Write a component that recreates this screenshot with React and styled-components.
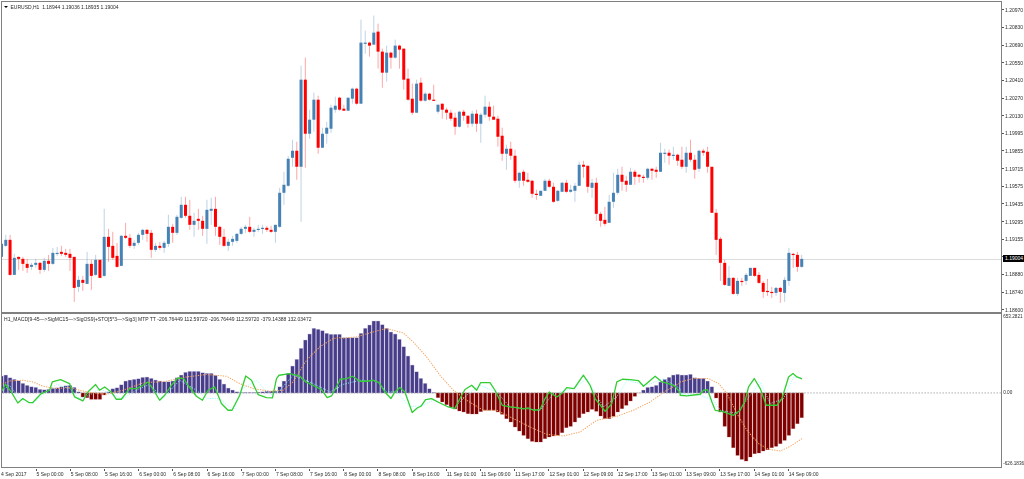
import React from 'react';
import styled, { createGlobalStyle } from 'styled-components';

const GlobalStyle = createGlobalStyle`
  html, body {
    margin: 0;
    padding: 0;
    background: #fff;
  }
  body {
    width: 1024px;
    height: 479px;
    overflow: hidden;
  }
`;

const Page = styled.div`
  display: grid;
  grid-template-columns: 1001px 22px;
  grid-template-rows: 311px 156px 11px;
  padding: 1px 0 0 1px;
  width: 1024px;
  height: 479px;
  box-sizing: border-box;
  font-family: 'Liberation Sans', Arial, sans-serif;
  font-size: 5px;
  color: #2a2a2a;
  filter: blur(0.25px);
`;

const Pane = styled.div`
  position: relative;
  box-sizing: border-box;
  border: 0 solid #808080;
  border-width: ${(p) => (p.$sub ? '2px 1.5px 1.5px 1.5px' : '1.5px 1.5px 0 1.5px')};
  overflow: hidden;
  svg {
    display: block;
    width: 100%;
    height: 100%;
  }
`;

const Legend = styled.div`
  position: absolute;
  left: ${(p) => p.$left}px;
  top: ${(p) => p.$top}px;
  display: flex;
  align-items: center;
  gap: 3px;
  white-space: pre;
  line-height: 6px;
  letter-spacing: ${(p) => p.$track || 0}px;
`;

const Arrow = styled.span`
  width: 0;
  height: 0;
  border-left: 2.5px solid transparent;
  border-right: 2.5px solid transparent;
  border-top: 2.5px solid #000;
`;

const PriceAxis = styled.div`
  display: flex;
  flex-direction: column;
`;

const PriceRow = styled.div`
  flex: 0 0 17.65px;
  display: flex;
  align-items: center;
  padding-left: 3px;
  background: linear-gradient(#555, #555) 0 50% / 2px 1px no-repeat;
`;

const Badge = styled.span`
  margin-left: -2px;
  padding: 0 0 0 2px;
  width: 21px;
  line-height: 7px;
  background: #000;
  color: #fff;
  transform: translateY(2px);
`;

const SubAxis = styled.div`
  display: flex;
  flex-direction: column;
  padding-top: 2px;
`;

const SubLabel = styled.div`
  height: 6px;
  line-height: 6px;
  margin-top: ${(p) => p.$gap}px;
  padding-left: 1.2px;
  font-size: 4.65px;
  white-space: nowrap;
`;

const TimeAxis = styled.div`
  grid-column: 1 / 3;
  display: flex;
  padding-top: 1px;
`;

const TimeLabel = styled.div`
  box-sizing: border-box;
  flex: 0 0 ${(p) => (p.$first ? 34.6 : 34.2)}px;
  padding: 2px 0 0 ${(p) => (p.$first ? 0 : 1)}px;
  line-height: 6px;
  white-space: nowrap;
  background: ${(p) =>
    p.$first ? 'none' : 'linear-gradient(#555, #555) 0 0 / 1px 2px no-repeat'};
`;

const STEP = 4.275;
const barX = (i) => 2 + STEP * i;

// [colour, high, body top, body bottom, low] in page pixels
const candles = [
  ['b',240,244,257,267],['b',235,240,246,247],['r',235,240,275,276],['b',254,258,275,275],['r',257,257,259,270],
  ['r',257,259,264,271],['r',259,264,268,273],['b',263,265,267,270],['b',259,263,265,268],['r',262,263,270,274],
  ['b',258,261,270,272],['r',255,261,264,271],['b',248,253,264,265],['b',247,253,254,256],['r',246,252,254,256],
  ['r',249,253,255,257],['r',249,254,258,271],['r',257,257,288,302],['b',276,280,287,292],['r',276,280,283,291],
  ['b',252,264,284,284],['r',260,264,276,290],['b',255,260,275,276],['r',260,260,278,278],['b',209,237,276,277],
  ['r',229,237,247,262],['r',232,246,258,260],['r',243,256,267,268],['b',235,236,266,266],['r',223,236,238,239],
  ['r',234,238,246,248],['b',240,243,246,249],['b',233,235,243,245],['b',229,230,235,240],['r',229,230,234,242],
  ['r',230,233,250,258],['b',243,246,250,252],['r',242,246,248,250],['b',241,243,248,253],['b',215,227,244,247],
  ['r',224,227,233,243],['b',215,217,233,235],['b',197,205,218,219],['r',197,205,216,218],['r',200,216,225,230],
  ['b',213,221,225,237],['r',209,219,221,230],['r',216,221,229,236],['b',200,210,229,244],['b',198,209,211,225],
  ['r',197,209,227,236],['r',226,227,237,245],['r',229,237,246,247],['b',239,242,246,251],['b',236,239,242,246],
  ['b',233,234,241,243],['b',227,229,234,235],['b',225,227,229,233],['r',217,227,232,233],['b',228,230,232,237],
  ['b',225,229,230,232],['b',225,228,229,234],['r',226,228,230,232],['r',226,230,232,233],['b',225,225,232,243],
  ['b',188,193,227,228],['b',172,185,193,205],['b',156,159,186,187],['b',140,151,158,167],['r',142,151,167,180],
  ['b',66,80,167,222],['r',58,80,134,168],['b',110,120,134,139],['b',93,100,120,132],['r',96,100,148,154],
  ['b',128,134,148,148],['b',122,128,134,144],['b',105,108,129,133],['b',97,106,110,113],['r',97,98,110,111],
  ['r',105,109,111,111],['b',98,98,111,111],['b',88,89,99,104],['r',88,89,104,105],['b',20,43,104,104],
  ['b',31,43,44,54],['r',42,43,46,57],['b',16,33,45,45],['r',24,32,52,69],['r',49,52,73,88],
  ['b',46,53,73,82],['r',52,53,58,69],['b',40,46,58,59],['r',45,46,50,69],['r',49,49,80,90],
  ['r',69,79,100,101],['r',84,99,113,115],['b',80,84,113,113],['r',78,83,101,102],['b',92,94,101,102],
  ['r',93,94,100,101],['r',85,100,101,101],['b',105,105,112,114],['r',104,104,110,119],['r',108,110,113,120],
  ['r',110,113,119,121],['r',113,118,127,135],['b',111,112,127,128],['r',110,112,116,121],['r',116,116,124,128],
  ['b',111,114,124,127],['r',110,114,124,132],['b',113,115,124,143],['b',96,107,115,118],['r',102,107,117,121],
  ['r',106,117,120,120],['r',116,119,137,147],['r',128,136,154,161],['b',145,149,154,170],['r',142,149,156,160],
  ['r',150,156,181,183],['b',172,173,181,188],['r',170,172,181,186],['r',173,180,182,183],['r',180,181,194,198],
  ['r',190,194,195,200],['b',191,191,196,196],['b',179,181,191,191],['r',179,181,187,188],['r',183,187,202,203],
  ['b',190,191,201,202],['b',182,183,192,192],['r',180,183,192,193],['b',185,190,192,193],['b',183,186,191,202],
  ['b',162,165,186,186],['r',161,165,167,178],['r',166,166,187,193],['b',179,183,188,198],['r',178,183,214,221],
  ['r',212,214,221,227],['r',207,220,224,226],['b',195,202,223,223],['b',173,193,202,208],['b',169,175,193,195],
  ['r',167,175,182,191],['r',176,181,185,192],['b',168,172,185,185],['r',170,172,177,185],['r',174,175,177,183],
  ['r',175,177,178,183],['b',168,169,178,180],['r',168,169,171,180],['r',167,170,172,178],['b',143,153,172,172],
  ['b',149,153,154,163],['r',150,153,156,165],['b',147,155,156,160],['r',154,155,161,166],['r',147,160,167,169],
  ['b',147,153,167,173],['r',140,153,160,162],['r',155,160,170,179],['b',150,151,169,172],['r',149,151,153,156],
  ['r',147,152,167,173],['r',167,167,213,213],['r',209,213,240,255],['r',237,239,263,281],['r',260,263,285,286],
  ['b',266,278,286,286],['r',277,278,294,295],['b',278,281,294,296],['r',278,281,282,286],['b',273,275,281,285],
  ['b',268,268,276,276],['r',268,268,276,277],['r',272,275,283,284],['r',281,283,292,298],['r',279,291,292,296],
  ['r',287,292,293,298],['b',287,288,293,296],['r',287,288,292,303],['b',277,280,293,302],['b',248,253,281,286],
  ['r',253,254,255,268],['r',252,255,267,272],['b',255,259,267,268],
];

// top (or bottom) of each histogram bar, in 3x crop rows below y=310
const histogram = [
  198,195,203,208,212,220,226,230,232,238,239,238,235,233,230,227,226,232,245,260,
  262,267,267,267,254,245,236,233,224,213,210,208,206,202,201,205,210,213,215,215,
  213,203,195,187,184,184,184,188,190,190,196,208,222,234,240,245,247,247,247,247,
  246,245,243,243,243,230,213,190,168,148,115,90,72,55,58,62,70,73,73,73,
  83,83,83,83,70,55,45,33,33,44,55,66,72,88,110,138,165,185,205,220,
  236,247,262,275,283,290,296,302,305,310,311,311,304,300,300,300,305,312,325,335,
  350,362,375,385,393,395,395,385,380,377,375,367,352,348,335,322,310,305,297,303,
  317,325,325,318,305,295,285,272,258,248,240,232,230,226,216,208,202,195,193,195,
  195,193,203,205,205,213,230,263,305,348,380,412,435,447,452,440,430,428,422,418,
  412,408,400,390,375,355,340,322,
];
const ZERO_ROW = 248;
const rowY = (r) => 310 + r / 3;

// polylines are read in three crops: x offset 0, 340 and 680
const crops = (offsetLists) =>
  offsetLists
    .flatMap(([off, pts]) => pts.map(([x, r]) => `${(off + x / 3).toFixed(1)},${rowY(r).toFixed(1)}`))
    .join(' ');

const greenLine = crops([
  [0, [[3,248],[18,222],[35,245],[55,278],[70,265],[88,277],[100,277],[125,250],[150,240],[158,215],[183,208],[210,220],[225,260],[250,272],[265,245],[288,223],[300,240],[315,230],[335,245],[350,267],[365,267],[390,235],[410,235],[430,225],[445,215],[462,240],[480,270],[495,255],[515,225],[535,203],[552,205],[565,225],[590,258],[608,270],[625,240],[645,230],[665,280],[685,300],[697,300],[720,255],[738,197],[755,210],[775,253],[800,262],[818,263],[830,205],[838,195],[870,190],[900,198],[918,215],[945,228],[965,238],[982,262],[995,257],[1020,210]]],
  [340, [[0,207],[20,205],[38,198],[60,213],[80,213],[100,210],[118,217],[135,245],[153,265],[165,245],[180,232],[195,245],[217,307],[232,293],[243,288],[257,268],[275,265],[300,278],[325,290],[345,295],[360,265],[375,238],[395,225],[410,240],[422,217],[450,217],[465,240],[487,285],[510,290],[530,292],[550,296],[565,293],[580,300],[600,298],[615,265],[628,245],[650,260],[665,250],[680,232],[702,235],[730,195],[750,225],[765,265],[795,303],[815,280],[830,215],[847,207],[870,208],[895,211],[910,228],[945,198],[965,215],[985,220],[1005,228],[1020,248]]],
  [680, [[0,255],[20,257],[60,252],[70,240],[82,238],[95,275],[105,300],[125,303],[160,315],[180,300],[195,270],[205,230],[222,205],[240,235],[258,285],[290,285],[305,265],[325,200],[338,190],[350,200],[365,206]]],
]);

const orangeLine = crops([
  [0, [[3,225],[30,212],[70,210],[100,215],[130,228],[170,235],[210,232],[240,240],[270,247],[320,252],[370,240],[430,218],[500,213],[560,200],[620,193],[680,198],[720,220],[760,235],[810,243],[850,240],[880,215],[920,150],[960,110],[1000,85],[1020,82]]],
  [340, [[0,85],[50,80],[100,65],[140,55],[190,68],[220,95],[260,140],[300,195],[340,240],[380,270],[430,300],[470,300],[520,325],[570,350],[620,372],[670,377],[720,365],[770,330],[830,318],[880,300],[930,275],[980,240],[1020,218]]],
  [680, [[0,215],[40,205],[85,205],[115,220],[140,250],[170,310],[200,360],[235,400],[265,417],[300,422],[330,408],[365,385]]],
]);

const cyanLine = crops([
  [0, [[3,245],[30,225],[60,265],[100,280],[130,255],[170,222],[210,235],[240,265],[270,255],[300,235],[340,255],[370,265],[410,240],[450,222],[490,265],[540,210],[590,240],[620,265],[660,265],[700,300],[730,235],[770,210],[810,255],[840,240],[880,195],[930,215],[990,245],[1020,230]]],
  [340, [[0,225],[60,210],[110,212],[140,245],[170,245],[210,290],[250,285],[280,270],[340,295],[380,255],[420,225],[470,245],[510,290],[600,300],[640,250],[700,235],[740,205],[790,290],[830,260],[860,210],[920,225],[970,205],[1020,235]]],
  [680, [[0,250],[60,255],[100,270],[120,300],[170,310],[210,255],[240,215],[270,280],[310,265],[340,200],[365,205]]],
]);

const priceLabels = [
  '1.20970','1.20830','1.20690','1.20550','1.20410','1.20270','1.20130','1.19995','1.19855',
  '1.19715','1.19575','1.19435','1.19295','1.19155','1.19004','1.18880','1.18740','1.18600',
];
const BID = '1.19004';

const timeLabels = [
  '4 Sep 2017','5 Sep 00:00','5 Sep 08:00','5 Sep 16:00','6 Sep 00:00','6 Sep 08:00','6 Sep 16:00',
  '7 Sep 00:00','7 Sep 08:00','7 Sep 16:00','8 Sep 00:00','8 Sep 08:00','8 Sep 16:00','11 Sep 01:00',
  '11 Sep 09:00','11 Sep 17:00','12 Sep 01:00','12 Sep 09:00','12 Sep 17:00','13 Sep 01:00',
  '13 Sep 09:00','13 Sep 17:00','14 Sep 01:00','14 Sep 09:00',
];

const CANDLE = { b: '#4682b4', r: '#ff0000' };

const Candle = ({ i, d }) => {
  const [c, hi, top, bot, lo] = d;
  const x = barX(i);
  const fill = CANDLE[c];
  return (
    <g>
      <rect x={x - 0.5} y={hi} width={1} height={lo - hi} fill={fill} opacity={0.35} />
      <rect x={x - 1.5} y={top} width={3} height={Math.max(bot - top, 1.2)} fill={fill} />
    </g>
  );
};

const HistBar = ({ i, row }) => {
  const y = rowY(row);
  const zero = rowY(ZERO_ROW);
  const up = row < ZERO_ROW;
  const fill = up ? '#483d8b' : '#800000';
  const top = Math.min(y, zero);
  const h = Math.abs(y - zero);
  const x = barX(i);
  return (
    <g fill={fill}>
      <rect x={x - STEP / 2} y={top - 0.4} width={STEP} height={h + 0.8} opacity={0.25} />
      <rect x={x - 1.6} y={top} width={3.2} height={h} />
    </g>
  );
};

const App = () => (
  <>
    <GlobalStyle />
    <Page>
      <Pane>
        <svg viewBox="2.5 2.5 998 309.5">
          <line x1="0" x2="1002" y1="259.6" y2="259.6" stroke="#dcdcdc" strokeWidth="1" />
          {candles.map((d, i) => (
            <Candle key={i} i={i} d={d} />
          ))}
        </svg>
        <Legend $left={1.5} $top={1.5}>
          <Arrow />
          <span>EURUSD,H1  1.18944 1.19036 1.18935 1.19004</span>
        </Legend>
      </Pane>
      <PriceAxis>
        {priceLabels.map((p) => (
          <PriceRow key={p}>{p === BID ? <Badge>{p}</Badge> : p}</PriceRow>
        ))}
      </PriceAxis>
      <Pane $sub>
        <svg viewBox="2.5 314 998 152.5">
          {histogram.map((row, i) => (
            <HistBar key={i} i={i} row={row} />
          ))}
          <line x1="0" x2="1002" y1="392.7" y2="392.7" stroke="#999" strokeWidth="0.8" strokeDasharray="1.5 1.5" />
          <polyline points={cyanLine} fill="none" stroke="#8ff" strokeWidth="0.9" strokeDasharray="1 1.4" />
          <polyline points={orangeLine} fill="none" stroke="#f4a460" strokeWidth="1" strokeDasharray="1.3 1.2" />
          <polyline points={greenLine} fill="none" stroke="#32cd32" strokeWidth="1.3" strokeLinejoin="round" />
        </svg>
        <Legend $left={2} $top={1.5} $track={0.02}>
          <span>H1_MACD[9-45—&gt;SigMC15—&gt;SigOS9]+STO[5*3—&gt;Sig3] MTP TT -206.76449 112.59720 -206.76449 112.59720 -379.14388 132.03472</span>
        </Legend>
      </Pane>
      <SubAxis>
        <SubLabel $gap={0}>653.2821</SubLabel>
        <SubLabel $gap={69.7}>0.00</SubLabel>
        <SubLabel $gap={65.3}>-626.1836</SubLabel>
      </SubAxis>
      <TimeAxis>
        {timeLabels.map((t, i) => (
          <TimeLabel key={t} $first={i === 0}>{t}</TimeLabel>
        ))}
      </TimeAxis>
    </Page>
  </>
);

export default App;
